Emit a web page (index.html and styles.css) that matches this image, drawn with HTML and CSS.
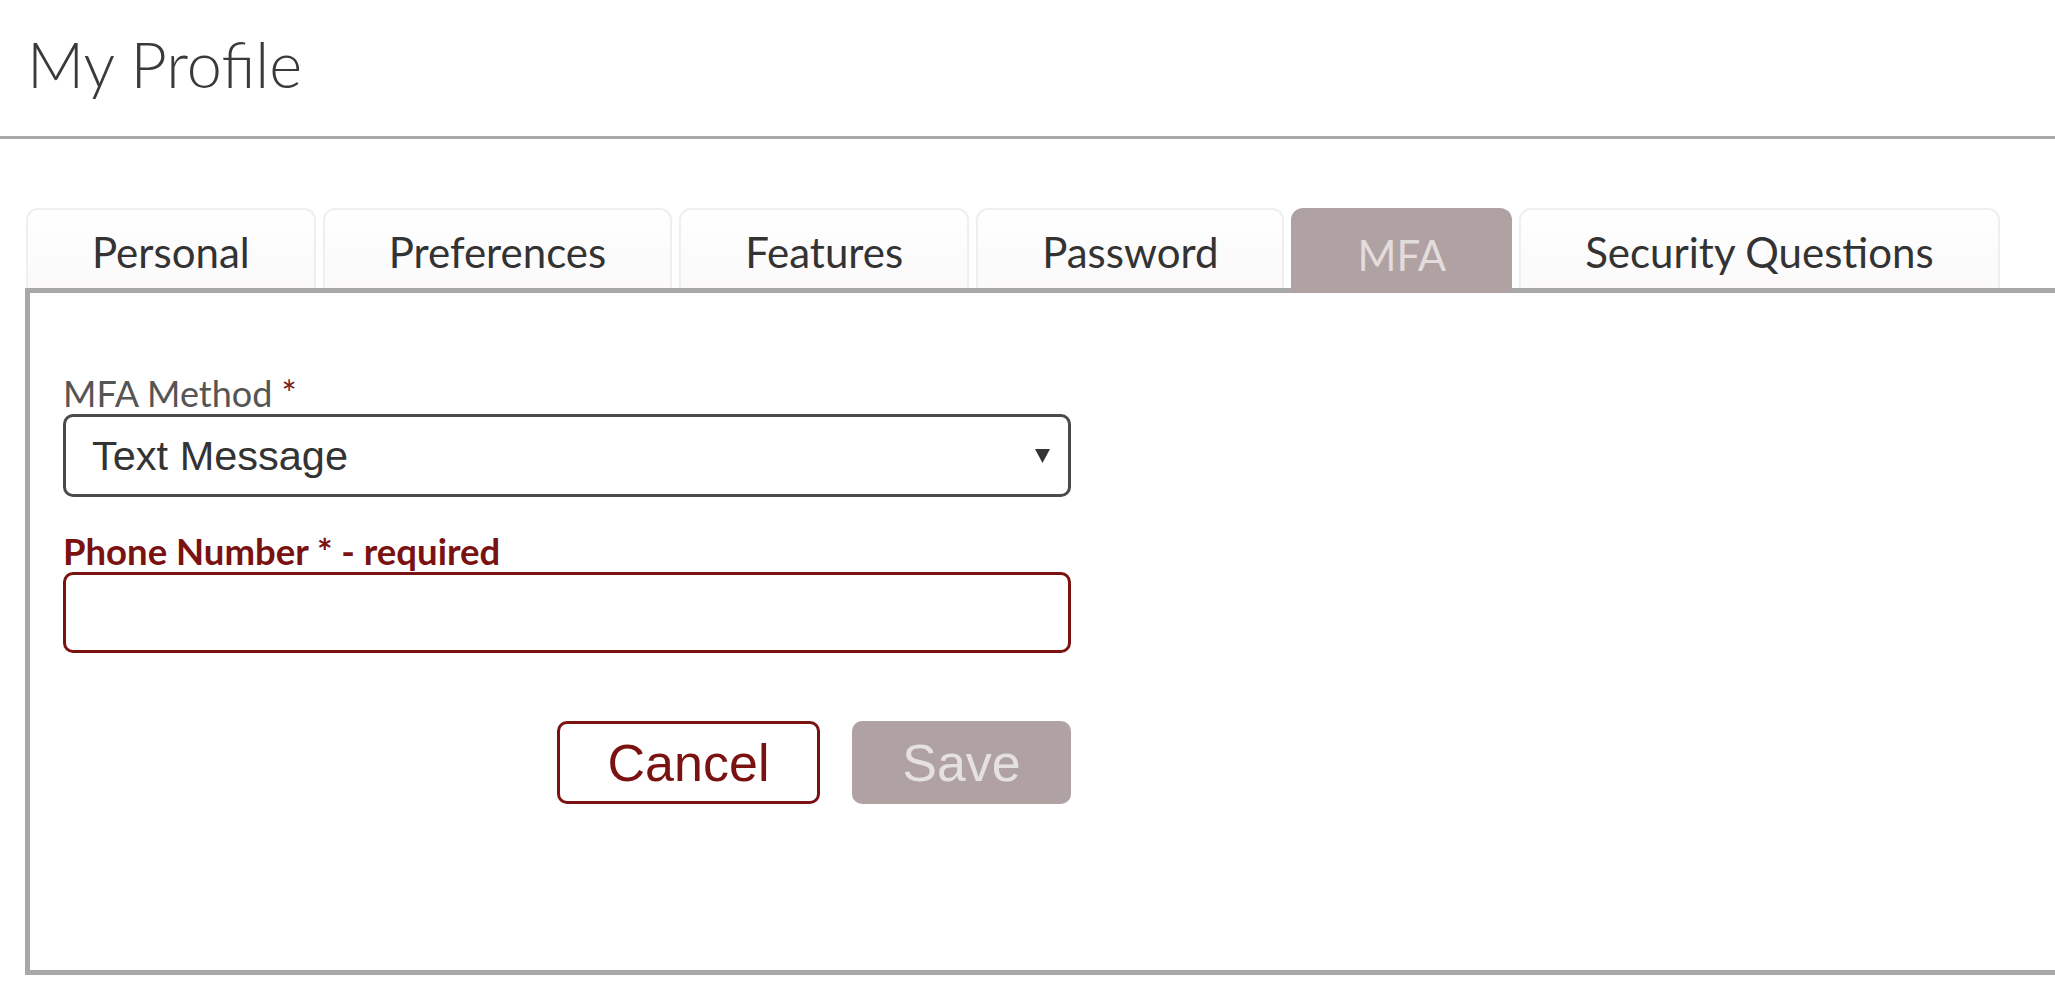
FILE: index.html
```html
<!DOCTYPE html>
<html lang="en">
<head>
<meta charset="utf-8">
<title>My Profile</title>
<link rel="stylesheet" href="styles.css">
</head>
<body>
<header class="page-header">
  <h1 class="page-title">My Profile</h1>
</header>
<main class="profile">
  <nav class="tabs">
    <a class="tab">Personal</a>
    <a class="tab">Preferences</a>
    <a class="tab">Features</a>
    <a class="tab">Password</a>
    <a class="tab tab-active">MFA</a>
    <a class="tab">Security Questions</a>
  </nav>
  <section class="panel">
    <form class="mfa-form">
      <label class="field-label">MFA Method <span class="req">*</span></label>
      <div class="select-box">
        <span class="select-value">Text Message</span>
        <svg class="select-arrow" width="15" height="15" viewBox="0 0 15 15"><polygon points="0,1 15,1 7.5,15" fill="#333"/></svg>
      </div>
      <label class="field-label field-label-error">Phone Number * - required</label>
      <div class="text-input text-input-error"></div>
      <div class="actions">
        <button type="button" class="btn btn-cancel">Cancel</button>
        <button type="button" class="btn btn-save">Save</button>
      </div>
    </form>
  </section>
</main>
</body>
</html>
```
FILE: styles.css
```css
html, body {
  margin: 0;
  padding: 0;
  background: #fff;
  overflow: hidden;
}
body {
  font-family: Lato, "Open Sans", sans-serif;
  color: #333;
}
.page-header {
  height: 136px;
  border-bottom: 3px solid #a8a8a8;
  box-sizing: content-box;
}
.page-title {
  margin: 0;
  padding: 32px 0 0 27px;
  font-size: 63px;
  font-weight: 300;
  line-height: 1;
  color: #3a3a3a;
}
.profile {
  margin-top: 69px;
  padding-left: 25px;
}
.tabs {
  display: flex;
  gap: 7px;
  height: 80px;
  padding-left: 1px;
  position: relative;
  z-index: 1;
}
.tab {
  display: flex;
  align-items: center;
  justify-content: center;
  padding: 6px 64px 0;
  border: 2px solid #efefef;
  border-bottom: none;
  border-radius: 12px 12px 0 0;
  background: linear-gradient(#ffffff, #fbf9f9);
  font-size: 42px;
  color: #333;
  box-sizing: border-box;
  height: 80px;
}
.tab-active {
  background: #b0a2a2;
  border-color: #b0a2a2;
  color: #e2dcdc;
  height: 85px;
}
.panel {
  width: 2100px;
  height: 687px;
  border: 5px solid #a8a8a8;
  box-sizing: border-box;
  padding: 80px 0 0 33px;
}
.mfa-form {
  width: 1008px;
  display: flex;
  flex-direction: column;
}
.field-label {
  display: block;
  font-size: 36px;
  line-height: 41px;
  color: #555;
}
.req {
  color: #7a1a1a;
}
.field-label-error {
  margin-top: 34px;
  font-size: 36.5px;
  font-weight: 700;
  color: #7a1212;
}
.select-box {
  height: 83px;
  border: 3px solid #4a4a4a;
  border-radius: 10px;
  box-sizing: border-box;
  display: flex;
  align-items: center;
  justify-content: space-between;
  padding: 0 18px 0 26px;
}
.select-value {
  font-family: "Liberation Sans", Arial, sans-serif;
  font-size: 41.5px;
  color: #333;
}
.text-input {
  height: 81px;
  border: 3px solid #444;
  border-radius: 10px;
  box-sizing: border-box;
}
.text-input-error {
  border-color: #7a1212;
}
.actions {
  margin-top: 68px;
  display: flex;
  justify-content: flex-end;
  gap: 32px;
}
.btn {
  height: 83px;
  border-radius: 10px;
  box-sizing: border-box;
  font-family: "Liberation Sans", Arial, sans-serif;
  font-size: 52px;
  padding: 0;
  cursor: pointer;
}
.btn-cancel {
  width: 263px;
  background: #fff;
  border: 3px solid #7a1212;
  color: #7a1212;
}
.btn-save {
  width: 219px;
  background: #b0a2a2;
  border: none;
  color: #e6e1e1;
}
```
